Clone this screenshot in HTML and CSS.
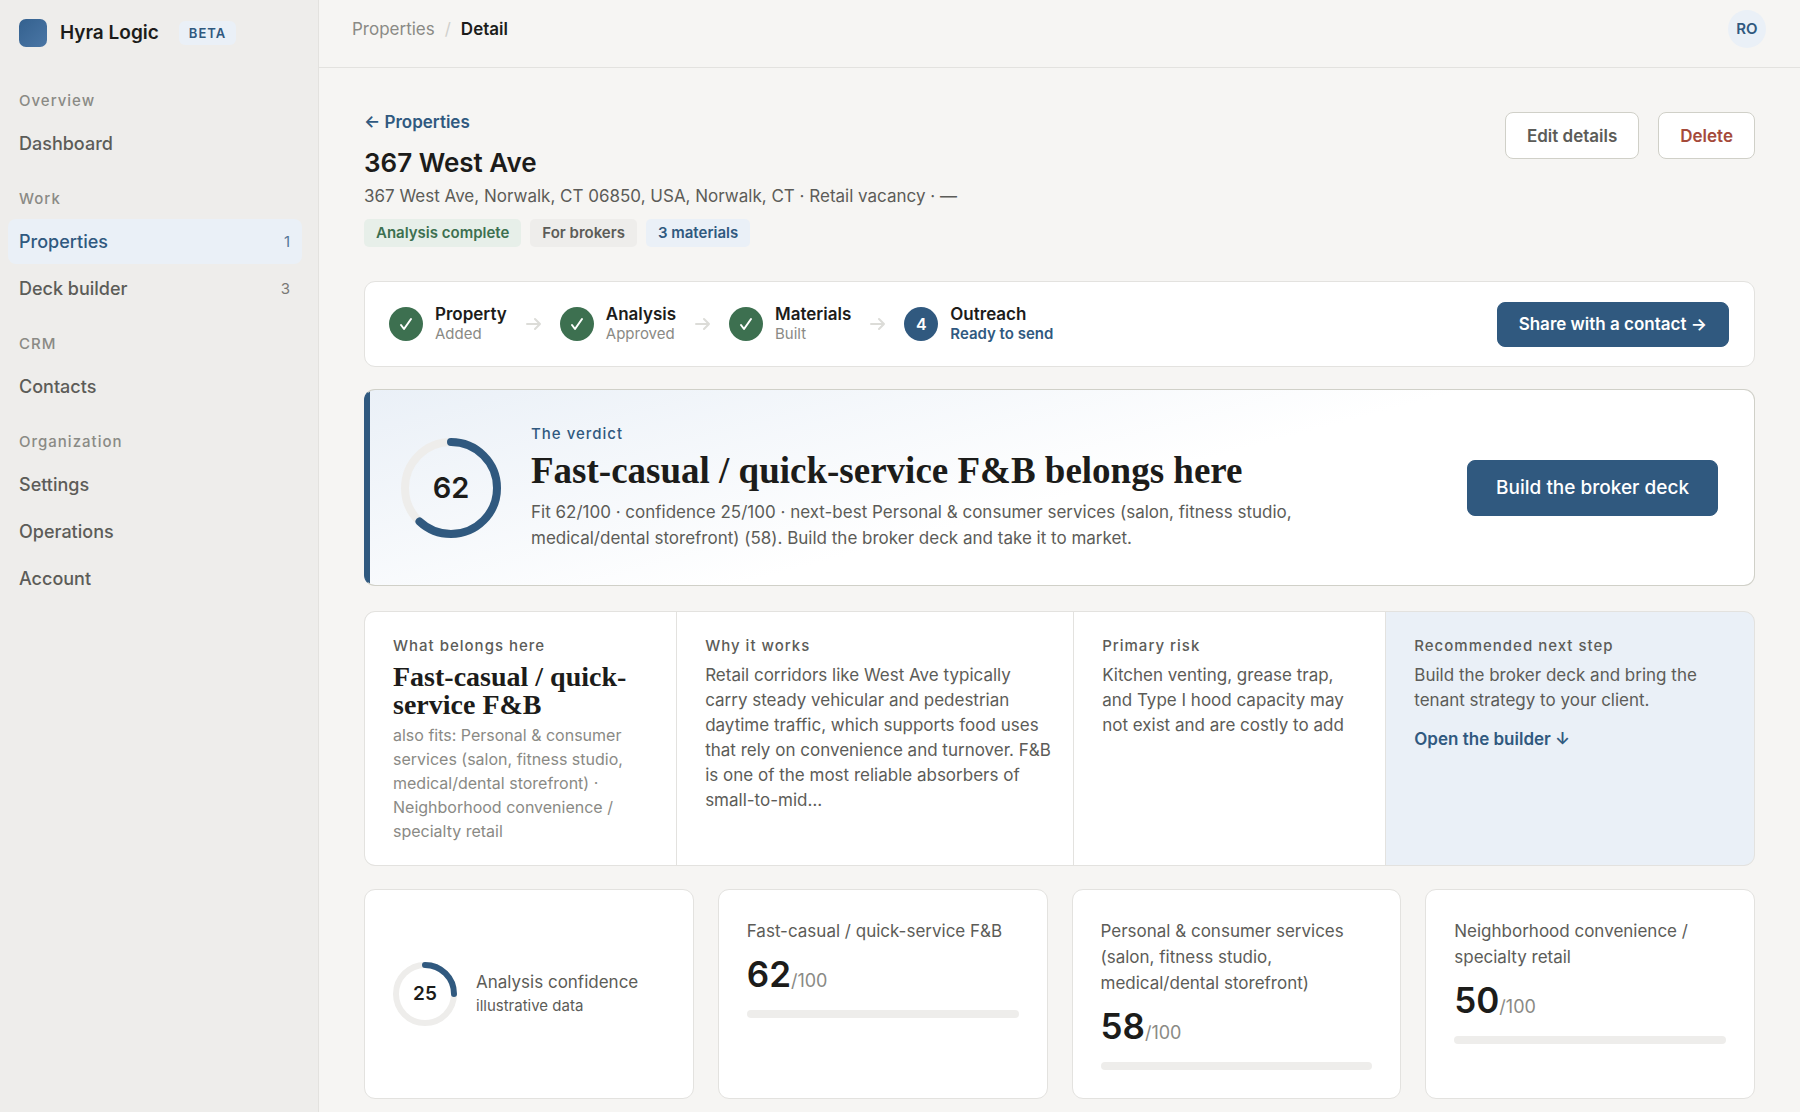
FILE: index.html
```
<!DOCTYPE html>
<html lang="en">
<head>
  <meta charset="UTF-8">
  <meta name="viewport" content="width=device-width, initial-scale=1.0">
  <title>367 West Ave - Hyra Logic</title>
  <link rel="stylesheet" href="styles.css">
</head>
<body>
  <div class="app">
    <aside class="sidebar">
      <div class="brand">
        <span class="brand-mark"></span>
        <span class="brand-name">Hyra Logic</span>
        <span class="beta">BETA</span>
      </div>
      <nav>
        <h2 class="nav-label">Overview</h2>
        <a class="nav-item" href="#">Dashboard</a>
        <h2 class="nav-label">Work</h2>
        <a class="nav-item active" href="#">Properties <span class="count">1</span></a>
        <a class="nav-item" href="#">Deck builder <span class="count">3</span></a>
        <h2 class="nav-label">CRM</h2>
        <a class="nav-item" href="#">Contacts</a>
        <h2 class="nav-label">Organization</h2>
        <a class="nav-item" href="#">Settings</a>
        <a class="nav-item" href="#">Operations</a>
        <a class="nav-item" href="#">Account</a>
      </nav>
    </aside>

    <div class="page">
      <header class="topbar">
        <div class="crumbs">
          <a href="#">Properties</a>
          <span class="slash">/</span>
          <strong>Detail</strong>
        </div>
        <button type="button" class="avatar">RO</button>
      </header>

      <main class="content">
        <section class="page-head">
          <div>
            <a class="back" href="#">← Properties</a>
            <h1>367 West Ave</h1>
            <p class="address">367 West Ave, Norwalk, CT 06850, USA, Norwalk, CT · Retail vacancy · —</p>
            <div class="chips">
              <span class="chip green">Analysis complete</span>
              <span class="chip">For brokers</span>
              <span class="chip blue">3 materials</span>
            </div>
          </div>
          <div class="actions">
            <button type="button" class="btn">Edit details</button>
            <button type="button" class="btn danger">Delete</button>
          </div>
        </section>

        <section class="card stepper">
          <ol class="steps">
            <li class="step">
              <span class="dot"><svg width="14" height="14" viewBox="0 0 14 14"><path d="M2 8l3 4L12 2"/></svg></span>
              <div><b>Property</b><small>Added</small></div>
            </li>
            <li class="arrow"><svg width="15" height="14" viewBox="0 0 15 14"><path d="M1 7h13M9 2l5 5-5 5"/></svg></li>
            <li class="step">
              <span class="dot"><svg width="14" height="14" viewBox="0 0 14 14"><path d="M2 8l3 4L12 2"/></svg></span>
              <div><b>Analysis</b><small>Approved</small></div>
            </li>
            <li class="arrow"><svg width="15" height="14" viewBox="0 0 15 14"><path d="M1 7h13M9 2l5 5-5 5"/></svg></li>
            <li class="step">
              <span class="dot"><svg width="14" height="14" viewBox="0 0 14 14"><path d="M2 8l3 4L12 2"/></svg></span>
              <div><b>Materials</b><small>Built</small></div>
            </li>
            <li class="arrow"><svg width="15" height="14" viewBox="0 0 15 14"><path d="M1 7h13M9 2l5 5-5 5"/></svg></li>
            <li class="step current">
              <span class="dot">4</span>
              <div><b>Outreach</b><small>Ready to send</small></div>
            </li>
          </ol>
          <button type="button" class="btn primary">Share with a contact →</button>
        </section>

        <section class="card verdict">
          <div class="ring">
            <svg width="100" height="100" viewBox="0 0 100 100">
              <circle class="track" cx="50" cy="50" r="46"/>
              <circle class="value" cx="50" cy="50" r="46" pathLength="100" stroke-dasharray="62 100" transform="rotate(-90 50 50)"/>
            </svg>
            <span>62</span>
          </div>
          <div class="verdict-text">
            <p class="label">The verdict</p>
            <h2>Fast-casual / quick-service F&amp;B belongs here</h2>
            <p>Fit 62/100 · confidence 25/100 · next-best Personal &amp; consumer services (salon, fitness studio, medical/dental storefront) (58). Build the broker deck and take it to market.</p>
          </div>
          <button type="button" class="btn primary large">Build the broker deck</button>
        </section>

        <section class="card brief">
          <div class="brief-cell">
            <p class="label">What belongs here</p>
            <h3>Fast-casual / quick-service F&amp;B</h3>
            <p class="also">also fits: Personal &amp; consumer services (salon, fitness studio, medical/dental storefront) · Neighborhood convenience / specialty retail</p>
          </div>
          <div class="brief-cell">
            <p class="label">Why it works</p>
            <p>Retail corridors like West Ave typically carry steady vehicular and pedestrian daytime traffic, which supports food uses that rely on convenience and turnover. F&amp;B is one of the most reliable absorbers of small-to-mid…</p>
          </div>
          <div class="brief-cell">
            <p class="label">Primary risk</p>
            <p>Kitchen venting, grease trap, and Type I hood capacity may not exist and are costly to add</p>
          </div>
          <div class="brief-cell next">
            <p class="label">Recommended next step</p>
            <p>Build the broker deck and bring the tenant strategy to your client.</p>
            <a href="#">Open the builder ↓</a>
          </div>
        </section>

        <section class="scores">
          <div class="card score confidence">
            <div class="ring small">
              <svg width="64" height="64" viewBox="0 0 64 64">
                <circle class="track" cx="32" cy="32" r="29"/>
                <circle class="value" cx="32" cy="32" r="29" pathLength="100" stroke-dasharray="25 100" transform="rotate(-90 32 32)"/>
              </svg>
              <span>25</span>
            </div>
            <div>
              <p>Analysis confidence</p>
              <p class="note">illustrative data</p>
            </div>
          </div>
          <div class="card score">
            <p>Fast-casual / quick-service F&amp;B</p>
            <div class="num">62<small>/100</small></div>
            <div class="bar"></div>
          </div>
          <div class="card score">
            <p>Personal &amp; consumer services (salon, fitness studio, medical/dental storefront)</p>
            <div class="num">58<small>/100</small></div>
            <div class="bar"></div>
          </div>
          <div class="card score">
            <p>Neighborhood convenience / specialty retail</p>
            <div class="num">50<small>/100</small></div>
            <div class="bar"></div>
          </div>
        </section>
      </main>
    </div>
  </div>
</body>
</html>
```
FILE: styles.css
```
:root {
  --ink: #1c1c1a;
  --text: #5c5c58;
  --muted: #8a8a85;
  --line: #e3e2df;
  --line-strong: #d0d0c8;
  --blue: #30597f;
  --blue-soft: #eaf0f7;
  --green: #3d7050;
}
* {
  box-sizing: border-box;
  margin: 0;
  padding: 0;
}
body {
  font-family: Inter, "Liberation Sans", sans-serif;
  font-size: 17px;
  line-height: 26px;
  color: var(--text);
  background: #f6f5f3;
}
a {
  text-decoration: none;
  color: inherit;
}
button {
  font: inherit;
  cursor: pointer;
}
.app {
  display: grid;
  grid-template-columns: 319px 1fr;
  min-height: 100vh;
}

/* sidebar */
.sidebar {
  background: #eeedeb;
  border-right: 1px solid var(--line);
  padding: 18px 16px 0 8px;
}
.brand {
  display: flex;
  align-items: center;
  height: 30px;
  padding-left: 11px;
  margin-bottom: 43px;
}
.brand-mark {
  width: 28px;
  height: 28px;
  border-radius: 7px;
  background: linear-gradient(135deg, #34618f, #4a76a5);
}
.brand-name {
  margin-left: 13px;
  font-size: 19px;
  font-weight: 600;
  color: #1c1c1a;
}
.beta {
  margin-left: 20px;
  padding: 0 10px;
  border-radius: 6px;
  font-size: 13px;
  line-height: 24px;
  font-weight: 600;
  letter-spacing: 1px;
  color: var(--blue);
  background: var(--blue-soft);
}
.nav-label {
  padding-left: 11px;
  margin: 23px 0 10px;
  font-size: 15px;
  line-height: 20px;
  font-weight: 500;
  letter-spacing: 1px;
  color: var(--muted);
}
.nav-label:first-child {
  margin-top: 0;
}
.nav-item {
  display: flex;
  justify-content: space-between;
  align-items: center;
  height: 45px;
  padding: 0 12px 0 11px;
  margin-bottom: 2px;
  border-radius: 8px;
  font-size: 18px;
  font-weight: 500;
}
.nav-item.active {
  color: var(--blue);
  background: var(--blue-soft);
}
.count {
  font-size: 15px;
  font-weight: 400;
  opacity: 0.8;
}

/* top bar */
.topbar {
  display: flex;
  justify-content: space-between;
  align-items: center;
  height: 68px;
  padding: 0 34px 10px 33px;
  border-bottom: 1px solid var(--line);
}
.crumbs {
  display: flex;
  gap: 10px;
  color: var(--muted);
}
.crumbs strong {
  font-weight: 600;
  color: var(--ink);
}
.slash {
  color: #d0d0cc;
}
.avatar {
  width: 38px;
  height: 38px;
  border: none;
  border-radius: 50%;
  font-size: 15px;
  font-weight: 600;
  color: var(--blue);
  background: var(--blue-soft);
}

/* page head */
.content {
  padding: 44px 45px 14px;
}
.page-head {
  display: flex;
  justify-content: space-between;
  align-items: flex-start;
  margin-bottom: 34px;
}
.back {
  display: block;
  line-height: 20px;
  font-weight: 600;
  color: var(--blue);
}
h1 {
  margin: 14px 0 6px;
  font-size: 26px;
  line-height: 34px;
  font-weight: 600;
  color: var(--ink);
}
.address {
  line-height: 20px;
}
.chips {
  display: flex;
  gap: 9px;
  margin-top: 13px;
}
.chip {
  padding: 0 12px;
  border-radius: 5px;
  font-size: 15px;
  line-height: 28px;
  font-weight: 600;
  background: #eeedeb;
}
.chip.green {
  color: var(--green);
  background: #e7efe9;
}
.chip.blue {
  color: var(--blue);
  background: var(--blue-soft);
}
.actions {
  display: flex;
  gap: 19px;
}
.btn {
  height: 47px;
  padding: 0 21px;
  border: 1px solid var(--line-strong);
  border-radius: 8px;
  font-weight: 600;
  white-space: nowrap;
  color: var(--text);
  background: #fff;
}
.btn.danger {
  color: #a54a3a;
}
.btn.primary {
  height: 45px;
  border-color: var(--blue);
  color: #fff;
  background: var(--blue);
}
.btn.large {
  height: 56px;
  padding: 0 28px;
  font-size: 19px;
  font-weight: 500;
}

/* cards */
.card {
  background: #fff;
  border: 1px solid var(--line);
  border-radius: 11px;
}
.stepper {
  display: flex;
  justify-content: space-between;
  align-items: center;
  height: 86px;
  padding: 0 25px 0 24px;
  margin-bottom: 22px;
}
.steps {
  display: flex;
  align-items: center;
  gap: 19px;
  list-style: none;
}
.step {
  display: flex;
  align-items: center;
  gap: 12px;
}
.step b,
.step small {
  display: block;
  line-height: 20px;
}
.step b {
  font-weight: 600;
  color: var(--ink);
}
.step small {
  font-size: 15px;
  color: var(--muted);
}
.step.current small {
  font-weight: 600;
  color: var(--blue);
}
.dot {
  display: flex;
  justify-content: center;
  align-items: center;
  width: 34px;
  height: 34px;
  border-radius: 50%;
  font-size: 16px;
  font-weight: 600;
  color: #fff;
  background: var(--green);
}
.step.current .dot {
  background: var(--blue);
}
.dot svg,
.arrow svg {
  display: block;
  fill: none;
  stroke: #fff;
  stroke-width: 2;
  stroke-linecap: round;
  stroke-linejoin: round;
}
.arrow svg {
  stroke: #dcdcd8;
}

/* verdict */
.verdict {
  display: flex;
  align-items: center;
  padding: 34px 36px;
  margin-bottom: 25px;
  border-color: var(--line-strong);
  border-left-color: var(--blue);
  background:
    linear-gradient(var(--blue), var(--blue)) left / 5px 100% no-repeat,
    linear-gradient(165deg, var(--blue-soft), #fff 52%);
}
.ring {
  display: grid;
  place-items: center;
  flex: none;
  font-size: 29px;
  font-weight: 600;
  color: var(--ink);
}
.ring svg,
.ring span {
  grid-area: 1 / 1;
}
.ring circle {
  fill: none;
  stroke: #eeedeb;
  stroke-width: 8;
}
.ring .value {
  stroke: var(--blue);
  stroke-linecap: round;
}
.ring.small {
  font-size: 19px;
}
.ring.small circle {
  stroke-width: 6;
}
.label {
  font-size: 15px;
  line-height: 20px;
  font-weight: 500;
  letter-spacing: 1px;
}
.verdict-text {
  flex: 1;
  max-width: 800px;
  margin: 0 auto 0 30px;
}
.verdict-text .label {
  color: var(--blue);
}
.verdict-text h2,
.brief-cell h3 {
  font-family: Georgia, "Liberation Serif", serif;
  font-weight: 700;
  color: var(--ink);
}
.verdict-text h2 {
  margin: 6px 0 7px;
  font-size: 37px;
  line-height: 42px;
}

/* brief */
.brief {
  display: grid;
  grid-template-columns: 11fr 14fr 11fr 13fr;
  gap: 1px;
  margin-bottom: 23px;
  overflow: hidden;
  background: var(--line);
}
.brief-cell {
  padding: 24px 20px 22px 28px;
  line-height: 25px;
  background: #fff;
}
.brief-cell.next {
  background: var(--blue-soft);
}
.brief-cell .label {
  margin-bottom: 7px;
  line-height: 20px;
}
.brief-cell h3 {
  font-size: 28px;
  line-height: 28px;
}
.brief-cell .also {
  margin-top: 4px;
  font-size: 16px;
  line-height: 24px;
  color: var(--muted);
}
.brief-cell a {
  display: block;
  margin-top: 14px;
  font-weight: 600;
  color: var(--blue);
}

/* scores */
.scores {
  display: grid;
  grid-template-columns: repeat(4, 1fr);
  gap: 24px;
}
.score {
  padding: 28px;
}
.confidence {
  display: flex;
  align-items: center;
  gap: 19px;
}
.confidence p {
  line-height: 24px;
}
.confidence .note {
  font-size: 15px;
}
.num {
  margin: 10px 0 9px;
  font-size: 35px;
  line-height: 40px;
  font-weight: 600;
  color: var(--ink);
}
.num small {
  font-size: 18px;
  font-weight: 400;
  color: var(--muted);
}
.bar {
  height: 8px;
  border-radius: 4px;
  background: #eeedeb;
}
```
